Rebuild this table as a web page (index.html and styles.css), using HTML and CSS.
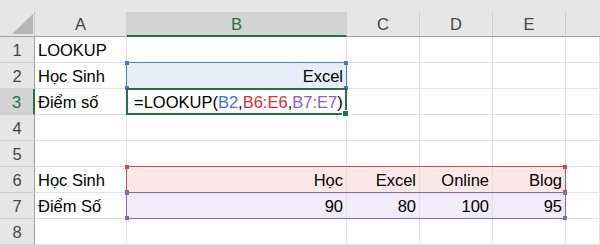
FILE: index.html
```html
<!DOCTYPE html>
<html lang="vi">
  <head>
    <meta charset="UTF-8">
    <meta name="viewport" content="width=device-width, initial-scale=1.0">
    <title>LOOKUP</title>
    <link rel="stylesheet" href="styles.css">
  </head>
  <body>
    <div class="top-strip"></div>
    <div class="sheet">
      <!-- column headers -->
      <div class="corner">
        <svg width="35" height="25" viewBox="0 0 35 25"><polygon points="12,22 33,22 33,2" fill="#b5b5b5"/></svg>
      </div>
      <div class="col-head">A</div>
      <div class="col-head active">B</div>
      <div class="col-head">C</div>
      <div class="col-head">D</div>
      <div class="col-head">E</div>
      <div class="col-head last"></div>

      <!-- row 1 -->
      <div class="row-head">1</div>
      <div class="cell">LOOKUP</div>
      <div class="cell"></div>
      <div class="cell"></div>
      <div class="cell"></div>
      <div class="cell"></div>
      <div class="cell"></div>

      <!-- row 2 -->
      <div class="row-head">2</div>
      <div class="cell">Học Sinh</div>
      <div class="cell num fill-blue">Excel</div>
      <div class="cell"></div>
      <div class="cell"></div>
      <div class="cell"></div>
      <div class="cell"></div>

      <!-- row 3 -->
      <div class="row-head active">3</div>
      <div class="cell">Điểm số</div>
      <div class="cell formula">=LOOKUP(<span class="ref-blue">B2</span>,<span class="ref-red">B6:E6</span>,<span class="ref-purple">B7:E7</span>)</div>
      <div class="cell"></div>
      <div class="cell"></div>
      <div class="cell"></div>
      <div class="cell"></div>

      <!-- row 4 -->
      <div class="row-head">4</div>
      <div class="cell"></div>
      <div class="cell"></div>
      <div class="cell"></div>
      <div class="cell"></div>
      <div class="cell"></div>
      <div class="cell"></div>

      <!-- row 5 -->
      <div class="row-head">5</div>
      <div class="cell"></div>
      <div class="cell"></div>
      <div class="cell"></div>
      <div class="cell"></div>
      <div class="cell"></div>
      <div class="cell"></div>

      <!-- row 6 -->
      <div class="row-head">6</div>
      <div class="cell">Học Sinh</div>
      <div class="cell num fill-red">Học</div>
      <div class="cell num fill-red">Excel</div>
      <div class="cell num fill-red">Online</div>
      <div class="cell num fill-red">Blog</div>
      <div class="cell"></div>

      <!-- row 7 -->
      <div class="row-head">7</div>
      <div class="cell">Điểm Số</div>
      <div class="cell num fill-purple">90</div>
      <div class="cell num fill-purple">80</div>
      <div class="cell num fill-purple">100</div>
      <div class="cell num fill-purple">95</div>
      <div class="cell"></div>

      <!-- row 8 -->
      <div class="row-head">8</div>
      <div class="cell"></div>
      <div class="cell"></div>
      <div class="cell"></div>
      <div class="cell"></div>
      <div class="cell"></div>
      <div class="cell"></div>

      <!-- range outlines drawn over the cells -->
      <div class="range range-blue area-b2"><i class="dot tl"></i><i class="dot tr"></i><i class="dot bl"></i><i class="dot br"></i></div>
      <div class="range range-red area-row6"><i class="dot tl"></i><i class="dot tr"></i><i class="dot bl"></i><i class="dot br"></i></div>
      <div class="range range-purple area-row7"><i class="dot tl"></i><i class="dot tr"></i><i class="dot bl"></i><i class="dot br"></i></div>
      <div class="selection area-b3"><i class="handle"></i></div>
    </div>
  </body>
</html>
```

FILE: styles.css
```css
body {
  margin: 0;
  width: 600px;
  height: 245px;
  overflow: hidden;
  background-color: #fff;
  font-family: "Liberation Sans", Arial, sans-serif;
  font-size: 16.5px;
  color: #000;
}

.top-strip {
  height: 12px;
  background-color: #e6e6e6;
}

.sheet {
  position: relative;
  display: grid;
  grid-template-columns: 35px 92px 220px 73px 73px 73px 1fr;
  grid-template-rows: 25px repeat(8, 26px);
}

.sheet > div {
  box-sizing: border-box;
}

.corner {
  background-color: #e6e6e6;
  border-right: 1px solid #c8c8c8;
  border-bottom: 1px solid #9f9f9f;
}

.corner svg {
  display: block;
}

.col-head {
  background-color: #e6e6e6;
  border-right: 1px solid #cfcfcf;
  border-bottom: 1px solid #9f9f9f;
  color: #444;
  display: flex;
  align-items: center;
  justify-content: center;
  padding-top: 1px;
}

.col-head.last {
  border-right: none;
}

.col-head.active {
  background-color: #d3d3d3;
  color: #217346;
  border-bottom: 2px solid #217346;
}

.row-head {
  background-color: #e6e6e6;
  border-right: 1px solid #9f9f9f;
  border-bottom: 1px solid #cfcfcf;
  color: #444;
  display: flex;
  align-items: center;
  justify-content: center;
  padding-top: 2px;
}

.row-head.active {
  background-color: #d3d3d3;
  color: #217346;
  border-right: 2px solid #217346;
}

.cell {
  border-right: 1px solid #e1e1e1;
  border-bottom: 1px solid #e1e1e1;
  display: flex;
  align-items: center;
  padding: 2px 3px 0;
  white-space: nowrap;
}

.cell.num {
  justify-content: flex-end;
}

.fill-blue {
  background-color: #e8eef9;
}

.fill-red {
  background-color: #fde8e8;
}

.fill-purple {
  background-color: #f1ecfa;
}

.formula {
  padding-left: 7px;
  overflow: visible;
}

.ref-blue {
  color: #3e6fd6;
}

.ref-red {
  color: #c9323e;
}

.ref-purple {
  color: #8b5ec0;
}

/* range outlines sit on top of the grid cells they cover */
.range,
.selection {
  position: absolute;
  top: -1px;
  left: -1px;
  right: 0;
  bottom: 0;
  pointer-events: none;
}

.area-b2 {
  grid-column: 3 / 4;
  grid-row: 3 / 4;
}

.area-b3 {
  grid-column: 3 / 4;
  grid-row: 4 / 5;
}

.area-row6 {
  grid-column: 3 / 7;
  grid-row: 7 / 8;
}

.area-row7 {
  grid-column: 3 / 7;
  grid-row: 8 / 9;
}

.range-blue {
  border: 1px solid #4a78d0;
  color: #4a78d0;
}

.range-red {
  border: 1px solid #c94a55;
  color: #c94a55;
}

.range-purple {
  border: 1px solid #8a64c4;
  color: #8a64c4;
}

.dot {
  position: absolute;
  width: 4px;
  height: 4px;
  background-color: currentColor;
}

.dot.tl { left: -2px; top: -2px; }
.dot.tr { right: -2px; top: -2px; }
.dot.bl { left: -2px; bottom: -2px; }
.dot.br { right: -2px; bottom: -2px; }

.selection {
  border: 2px solid #217346;
}

.handle {
  position: absolute;
  right: -4px;
  bottom: -4px;
  width: 5px;
  height: 5px;
  background-color: #217346;
  border: 1px solid #fff;
}
```
